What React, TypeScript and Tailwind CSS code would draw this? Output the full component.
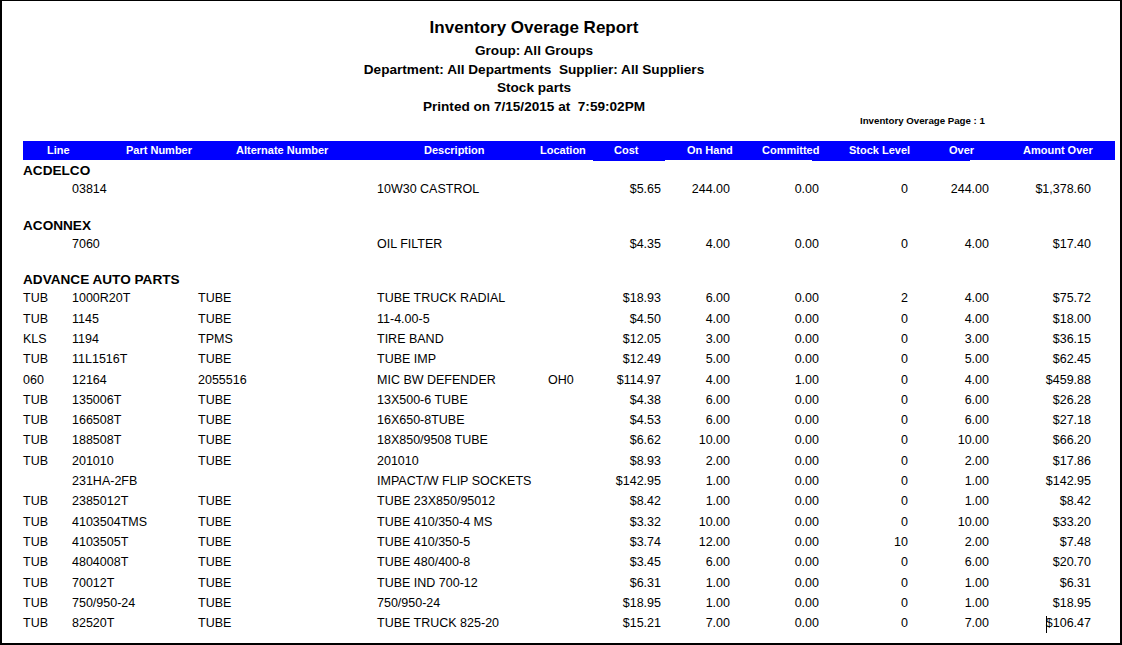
import React from "react";

type Row = string[];

const groups: { name: string; gap: string; rows: Row[] }[] = [
  {
    name: "ACDELCO",
    gap: "",
    rows: [["", "03814", "", "10W30 CASTROL", "", "$5.65", "244.00", "0.00", "0", "244.00", "$1,378.60"]],
  },
  {
    name: "ACONNEX",
    gap: "mt-[20px]",
    rows: [["", "7060", "", "OIL FILTER", "", "$4.35", "4.00", "0.00", "0", "4.00", "$17.40"]],
  },
  {
    name: "ADVANCE AUTO PARTS",
    gap: "mt-[19px]",
    rows: [
      ["TUB", "1000R20T", "TUBE", "TUBE TRUCK RADIAL", "", "$18.93", "6.00", "0.00", "2", "4.00", "$75.72"],
      ["TUB", "1145", "TUBE", "11-4.00-5", "", "$4.50", "4.00", "0.00", "0", "4.00", "$18.00"],
      ["KLS", "1194", "TPMS", "TIRE BAND", "", "$12.05", "3.00", "0.00", "0", "3.00", "$36.15"],
      ["TUB", "11L1516T", "TUBE", "TUBE IMP", "", "$12.49", "5.00", "0.00", "0", "5.00", "$62.45"],
      ["060", "12164", "2055516", "MIC BW DEFENDER", "OH0", "$114.97", "4.00", "1.00", "0", "4.00", "$459.88"],
      ["TUB", "135006T", "TUBE", "13X500-6 TUBE", "", "$4.38", "6.00", "0.00", "0", "6.00", "$26.28"],
      ["TUB", "166508T", "TUBE", "16X650-8TUBE", "", "$4.53", "6.00", "0.00", "0", "6.00", "$27.18"],
      ["TUB", "188508T", "TUBE", "18X850/9508 TUBE", "", "$6.62", "10.00", "0.00", "0", "10.00", "$66.20"],
      ["TUB", "201010", "TUBE", "201010", "", "$8.93", "2.00", "0.00", "0", "2.00", "$17.86"],
      ["", "231HA-2FB", "", "IMPACT/W FLIP SOCKETS", "", "$142.95", "1.00", "0.00", "0", "1.00", "$142.95"],
      ["TUB", "2385012T", "TUBE", "TUBE 23X850/95012", "", "$8.42", "1.00", "0.00", "0", "1.00", "$8.42"],
      ["TUB", "4103504TMS", "TUBE", "TUBE 410/350-4 MS", "", "$3.32", "10.00", "0.00", "0", "10.00", "$33.20"],
      ["TUB", "4103505T", "TUBE", "TUBE 410/350-5", "", "$3.74", "12.00", "0.00", "10", "2.00", "$7.48"],
      ["TUB", "4804008T", "TUBE", "TUBE 480/400-8", "", "$3.45", "6.00", "0.00", "0", "6.00", "$20.70"],
      ["TUB", "70012T", "TUBE", "TUBE IND 700-12", "", "$6.31", "1.00", "0.00", "0", "1.00", "$6.31"],
      ["TUB", "750/950-24", "TUBE", "750/950-24", "", "$18.95", "1.00", "0.00", "0", "1.00", "$18.95"],
      ["TUB", "82520T", "TUBE", "TUBE TRUCK 825-20", "", "$15.21", "7.00", "0.00", "0", "7.00", "$106.47"],
    ],
  },
];

const headers: [string, string][] = [
  ["Line", "w-[79px]"],
  ["Part Number", "w-[110px]"],
  ["Alternate Number", "w-[188px]"],
  ["Description", "w-[116px]"],
  ["Location", "w-[74px]"],
  ["Cost", "w-[73px]"],
  ["On Hand", "w-[75px]"],
  ["Committed", "w-[87px]"],
  ["Stock Level", "w-[100px]"],
  ["Over", "w-[74px]"],
  ["Amount Over", "w-[80px]"],
];

function DataRow({ row, caret }: { row: Row; caret?: boolean }) {
  return (
    <div className="grid grid-cols-[49px_126px_179px_171px_52px_61px_69px_89px_89px_81px_102px] h-[20.3px] leading-[20.3px] text-[12.5px] text-black whitespace-nowrap">
      {row.map((cell, i) => (
        <div key={i} className={i >= 5 ? "text-right relative" : "text-left"}>
          {i === 10 && caret && <span className="absolute left-[57px] top-[3px] h-[17px] w-px bg-black" />}
          {cell}
        </div>
      ))}
    </div>
  );
}

export default function App() {
  return (
    <div className="w-[1122px] h-[645px] overflow-hidden bg-white border-l-2 border-t border-r-2 border-b-2 border-black font-['Liberation_Sans',Arial,sans-serif] text-black">
      <div className="pl-[21px] pt-[16px]">
        <div className="w-[1022px] text-center font-bold">
          <div className="text-[17px] leading-[22px]">Inventory Overage Report</div>
          <div className="mt-[3px] text-[13.6px] leading-[18.7px]">
            <div>Group: All Groups</div>
            <div className="whitespace-pre">Department: All Departments  Supplier: All Suppliers</div>
            <div>Stock parts</div>
            <div className="whitespace-pre">Printed on 7/15/2015 at  7:59:02PM</div>
          </div>
        </div>
        <div className="-mt-[2px] pl-[837px] text-[9.7px] leading-[11px] font-bold">Inventory Overage Page : 1</div>

        <div className="mt-[15px] w-[1092px] h-[19px] bg-[#0000ff] flex items-center pl-[24px] text-[11px] font-bold text-white whitespace-nowrap">
          {headers.map(([label, w]) => (
            <div key={label} className={w}>
              {label}
            </div>
          ))}
        </div>
        <div className="flex h-px">
          <div className="ml-[570px] w-[72px] bg-[#0000ff]" />
          <div className="ml-[147px] w-[158px] bg-[#0000ff]" />
        </div>

        <div className="mt-[3px]">
          {groups.map((g, gi) => (
            <div key={g.name} className={g.gap}>
              <div className="h-[15px] leading-[14px] text-[13.6px] font-bold">{g.name}</div>
              {g.rows.map((r, ri) => (
                <DataRow key={ri} row={r} caret={gi === 2 && ri === g.rows.length - 1} />
              ))}
            </div>
          ))}
        </div>
      </div>
    </div>
  );
}
